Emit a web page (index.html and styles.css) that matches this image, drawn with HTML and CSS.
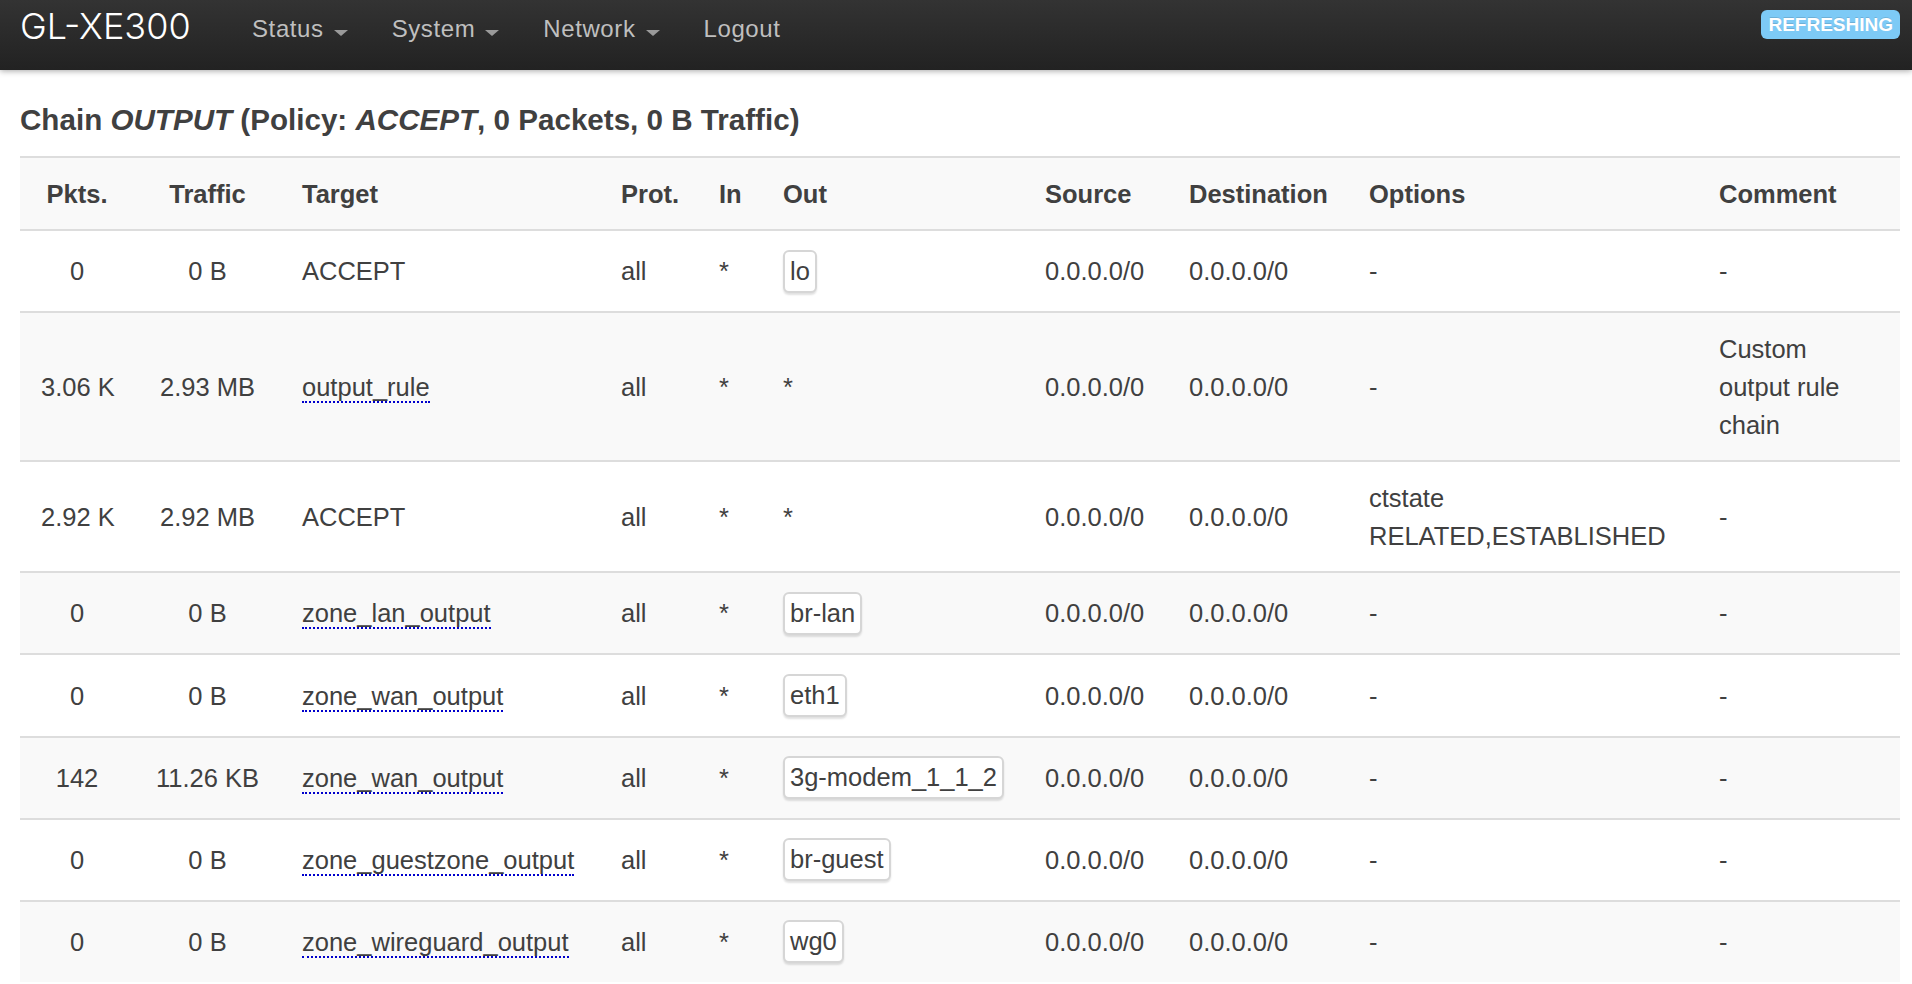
FILE: index.html
```html
<!DOCTYPE html>
<html lang="en">
<head>
<meta charset="utf-8">
<title>GL-XE300 - Firewall Status</title>
<link rel="stylesheet" href="styles.css">
</head>
<body>
<header class="topbar">
  <a class="brand">GL-XE300</a>
  <ul class="nav">
    <li><a class="nav-link">Status<span class="caret"></span></a></li>
    <li><a class="nav-link">System<span class="caret"></span></a></li>
    <li><a class="nav-link">Network<span class="caret"></span></a></li>
    <li><a class="nav-link">Logout</a></li>
  </ul>
  <span class="label-refresh">REFRESHING</span>
</header>
<main class="content">
  <h3 class="chain-title">Chain <em>OUTPUT</em> (Policy: <em>ACCEPT</em>, 0 Packets, 0 B Traffic)</h3>
  <table class="rules">
    <colgroup>
      <col class="c-pkts"><col class="c-traffic"><col class="c-target"><col class="c-prot"><col class="c-in">
      <col class="c-out"><col class="c-src"><col class="c-dst"><col class="c-opts"><col class="c-comment">
    </colgroup>
    <thead>
      <tr>
        <th class="num">Pkts.</th><th class="num">Traffic</th><th>Target</th><th>Prot.</th><th>In</th>
        <th>Out</th><th>Source</th><th>Destination</th><th>Options</th><th class="comment">Comment</th>
      </tr>
    </thead>
    <tbody>
      <tr>
        <td class="num">0</td><td class="num">0 B</td><td>ACCEPT</td><td>all</td><td>*</td>
        <td><span class="ifacebadge">lo</span></td><td>0.0.0.0/0</td><td>0.0.0.0/0</td><td class="wrap">-</td><td class="comment">-</td>
      </tr>
      <tr>
        <td class="num">3.06 K</td><td class="num">2.93 MB</td><td><span class="tip">output_rule</span></td><td>all</td><td>*</td>
        <td>*</td><td>0.0.0.0/0</td><td>0.0.0.0/0</td><td class="wrap">-</td><td class="comment">Custom output rule chain</td>
      </tr>
      <tr>
        <td class="num">2.92 K</td><td class="num">2.92 MB</td><td>ACCEPT</td><td>all</td><td>*</td>
        <td>*</td><td>0.0.0.0/0</td><td>0.0.0.0/0</td><td class="wrap">ctstate RELATED,ESTABLISHED</td><td class="comment">-</td>
      </tr>
      <tr>
        <td class="num">0</td><td class="num">0 B</td><td><span class="tip">zone_lan_output</span></td><td>all</td><td>*</td>
        <td><span class="ifacebadge">br-lan</span></td><td>0.0.0.0/0</td><td>0.0.0.0/0</td><td class="wrap">-</td><td class="comment">-</td>
      </tr>
      <tr>
        <td class="num">0</td><td class="num">0 B</td><td><span class="tip">zone_wan_output</span></td><td>all</td><td>*</td>
        <td><span class="ifacebadge">eth1</span></td><td>0.0.0.0/0</td><td>0.0.0.0/0</td><td class="wrap">-</td><td class="comment">-</td>
      </tr>
      <tr>
        <td class="num">142</td><td class="num">11.26 KB</td><td><span class="tip">zone_wan_output</span></td><td>all</td><td>*</td>
        <td><span class="ifacebadge">3g-modem_1_1_2</span></td><td>0.0.0.0/0</td><td>0.0.0.0/0</td><td class="wrap">-</td><td class="comment">-</td>
      </tr>
      <tr>
        <td class="num">0</td><td class="num">0 B</td><td><span class="tip">zone_guestzone_output</span></td><td>all</td><td>*</td>
        <td><span class="ifacebadge">br-guest</span></td><td>0.0.0.0/0</td><td>0.0.0.0/0</td><td class="wrap">-</td><td class="comment">-</td>
      </tr>
      <tr>
        <td class="num">0</td><td class="num">0 B</td><td><span class="tip">zone_wireguard_output</span></td><td>all</td><td>*</td>
        <td><span class="ifacebadge">wg0</span></td><td>0.0.0.0/0</td><td>0.0.0.0/0</td><td class="wrap">-</td><td class="comment">-</td>
      </tr>
    </tbody>
  </table>
</main>
</body>
</html>
```

FILE: styles.css
```css
html {
  overflow: hidden;
}

body {
  margin: 0;
  background: #fff;
  color: #404040;
  font-family: "Liberation Sans", Arial, Helvetica, sans-serif;
}

/* ---------- top bar ---------- */
.topbar {
  position: relative;
  z-index: 1;
  height: 70px;
  box-sizing: border-box;
  display: flex;
  align-items: flex-start;
  padding: 0 12px 0 20px;
  background: linear-gradient(to bottom, #333333, #222222);
  box-shadow: 0 1px 6px rgba(0, 0, 0, 0.35);
}

.brand {
  width: 232px;
  flex: none;
  margin-top: 9px;
  font-family: Inter, "Liberation Sans", Arial, sans-serif;
  font-weight: 300;
  font-size: 36px;
  line-height: 35px;
  color: #ffffff;
  letter-spacing: 0;
}

.nav {
  display: flex;
  gap: 44px;
  margin: 17px 0 0;
  padding: 0;
  list-style: none;
}

.nav-link {
  display: inline-block;
  font-size: 24px;
  line-height: 24px;
  letter-spacing: 0.6px;
  color: #bfbfbf;
}

.caret {
  display: inline-block;
  width: 0;
  height: 0;
  margin-left: 10px;
  border-left: 7px solid transparent;
  border-right: 7px solid transparent;
  border-top: 6px solid #9a9a9a;
  vertical-align: 1px;
}

.label-refresh {
  margin-left: auto;
  margin-top: 10px;
  padding: 2px 7px;
  border-radius: 6px;
  background: #7dcaf6;
  color: #ffffff;
  font-weight: bold;
  font-size: 19px;
  line-height: 25px;
  text-shadow: 0 -1px 0 rgba(0, 0, 0, 0.12);
}

/* ---------- content ---------- */
.content {
  padding: 0 12px 0 20px;
}

.chain-title {
  margin: 33px 0 19px;
  font-size: 29.6px;
  line-height: 34px;
  font-weight: bold;
  color: #404040;
}

.chain-title em {
  font-style: italic;
}

.rules {
  width: 100%;
  table-layout: fixed;
  border-collapse: separate;
  border-spacing: 0;
  font-size: 25.5px;
  line-height: 38px;
}

.c-pkts { width: 114px; }
.c-traffic { width: 147px; }
.c-target { width: 319px; }
.c-prot { width: 98px; }
.c-in { width: 64px; }
.c-out { width: 262px; }
.c-src { width: 144px; }
.c-dst { width: 180px; }
.c-opts { width: 350px; }
.c-comment { width: 202px; }

.rules th,
.rules td {
  padding: 16.6px 21px 16.5px;
  border-top: 2px solid #dddddd;
  text-align: left;
  vertical-align: middle;
  white-space: nowrap;
}

.rules th {
  font-weight: bold;
}

.rules thead tr {
  background: #f9f9f9;
}

.rules tbody tr:nth-child(even) {
  background: #f9f9f9;
}

.rules .num {
  text-align: center;
}

.rules .wrap,
.rules .comment {
  white-space: normal;
}

.rules .comment {
  padding-right: 50px;
}

.tip {
  border-bottom: 2px dotted #0000cc;
}

.ifacebadge {
  display: inline-block;
  margin: 2px 0;
  padding: 2px 5px;
  line-height: 35px;
  background: #ffffff;
  border: 2px solid #d6d6d6;
  border-radius: 6px;
  box-shadow: 0 2px 2px rgba(0, 0, 0, 0.12);
  white-space: nowrap;
}
```
